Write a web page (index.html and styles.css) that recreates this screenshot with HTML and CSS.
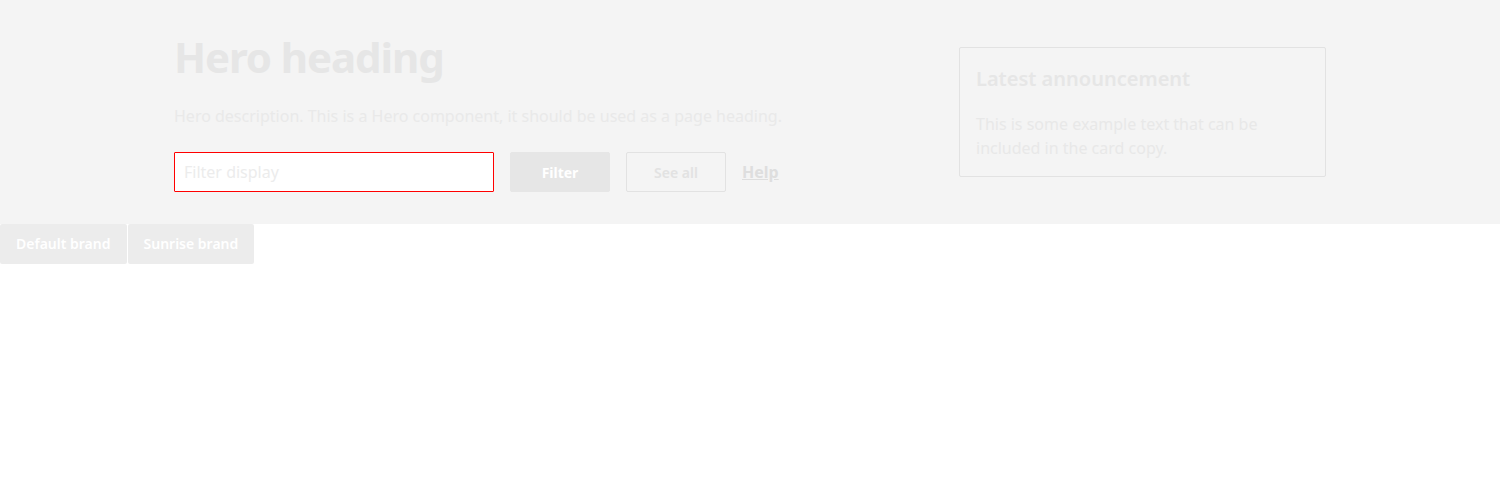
FILE: index.html
```html
<!DOCTYPE html>
<html lang="en">
<head>
<meta charset="utf-8">
<title>Hero</title>
<link rel="stylesheet" href="styles.css">
</head>
<body>
<section class="hero">
  <div class="hero-inner">
    <div class="hero-main">
      <h1 class="hero-title">Hero heading</h1>
      <p class="hero-desc">Hero description. This is a Hero component, it should be used as a page heading.</p>
      <div class="hero-actions">
        <input class="filter-input" type="text" placeholder="Filter display">
        <button class="btn btn-primary" type="button">Filter</button>
        <button class="btn btn-secondary" type="button">See all</button>
        <a class="help-link" href="#">Help</a>
      </div>
    </div>
    <aside class="card">
      <h2 class="card-title">Latest announcement</h2>
      <p class="card-text">This is some example text that can be included in the card copy.</p>
    </aside>
  </div>
</section>
<div class="brand-switch">
  <button class="brand-btn" type="button">Default brand</button>
  <button class="brand-btn" type="button">Sunrise brand</button>
</div>
</body>
</html>
```

FILE: styles.css
```css
* { box-sizing: border-box; }

body {
  margin: 0;
  font-family: "Noto Sans", "Open Sans", sans-serif;
  background: #ffffff;
}

.hero {
  background: #f4f4f4;
  padding: 32px 0;
}

.hero-inner {
  max-width: 1152px;
  margin: 0 auto;
  display: flex;
  align-items: center;
  justify-content: space-between;
}

.hero-title {
  margin: 0;
  font-size: 42px;
  line-height: 50px;
  font-weight: 700;
  letter-spacing: -1.1px;
  color: #e6e6e6;
}

.hero-desc {
  margin: 22px 0 24px;
  font-size: 16px;
  line-height: 24px;
  color: #e9e9e9;
}

.hero-actions {
  display: flex;
  align-items: center;
  gap: 16px;
}

.filter-input {
  width: 320px;
  height: 40px;
  border: 1px solid #ff0000;
  border-radius: 1px;
  padding: 0 9px;
  font-family: inherit;
  font-size: 16px;
  background: #ffffff;
  outline: none;
}

.filter-input::placeholder { color: #ececec; }

.btn {
  width: 100px;
  height: 40px;
  border-radius: 2px;
  font-family: inherit;
  font-size: 14px;
  cursor: pointer;
}

.btn-primary {
  background: #e6e6e6;
  border: 1px solid #e6e6e6;
  color: #ffffff;
  font-weight: 700;
}

.btn-secondary {
  background: transparent;
  border: 1px solid #e2e2e2;
  color: #e2e2e2;
  font-weight: 600;
}

.help-link {
  font-size: 16px;
  font-weight: 700;
  color: #dedede;
  text-decoration: underline;
}

.card {
  width: 367px;
  border: 1px solid #e2e2e2;
  border-radius: 2px;
  padding: 16px;
}

.card-title {
  margin: 0 0 18px;
  font-size: 20px;
  line-height: 30px;
  font-weight: 600;
  color: #e6e6e6;
}

.card-text {
  margin: 0;
  font-size: 16px;
  line-height: 24px;
  color: #e8e8e8;
}

.brand-switch {
  display: flex;
  gap: 1px;
}

.brand-btn {
  height: 40px;
  padding: 0 16px 2px;
  border: none;
  border-radius: 2px;
  background: #ececec;
  color: #ffffff;
  font-family: inherit;
  font-size: 14px;
  font-weight: 600;
  cursor: pointer;
}
```
